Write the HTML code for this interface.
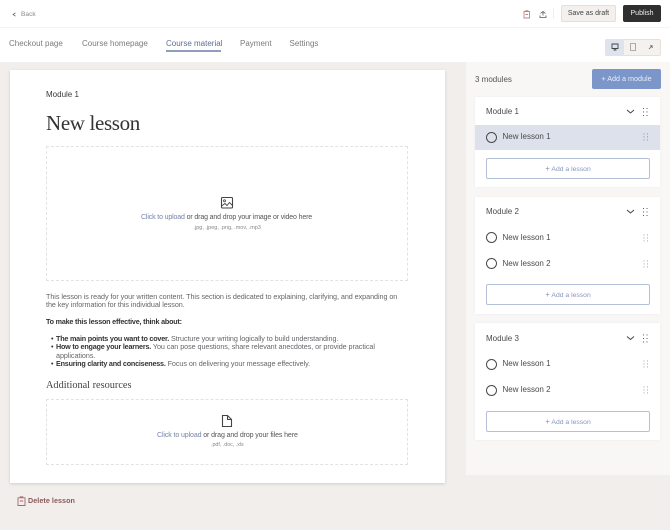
<!DOCTYPE html>
<html><head><meta charset="utf-8"><style>
html,body{margin:0;padding:0}
body{width:670px;height:530px;position:relative;overflow:hidden;background:#f2eeeb;font-family:"Liberation Sans",sans-serif;color:#3f3f3f}
.a{position:absolute;white-space:nowrap}
.b{position:absolute;box-sizing:border-box}
svg{position:absolute;overflow:visible;fill:none}
.t{font-size:8px;color:#7b7b7b;top:37.6px;line-height:12px}
.p{font-size:7.2px;line-height:8.4px;color:#66666a;letter-spacing:-.05px}
.p b{color:#333;letter-spacing:-.2px}
.card{background:#fff;left:475px;width:185px;box-shadow:0 0 2px rgba(0,0,0,.05)}
.mh{font-size:8px;color:#4a4a4a;line-height:12px}
.ln{font-size:8px;color:#4a4a4a;line-height:12px}
.c{width:11px;height:11px;border:1px solid #4a4a4a;border-radius:50%;left:486px}
.add{left:486px;width:164px;height:21px;background:#fff;border:1px solid #b4bfd8;border-radius:2px;text-align:center;font-size:6.8px;line-height:19px;color:#8596bd}
</style></head><body>

<div class="b" style="left:0;top:0;width:670px;height:62px;background:#fff"></div>
<div class="b" style="left:0;top:27px;width:670px;height:1px;background:#f6f4f2"></div>

<svg style="left:0;top:0" width="20" height="28"><path d="M15.5 12.8 L13 14.5 L15.5 16.2" stroke="#666" stroke-width=".8"/></svg>
<div class="a" style="left:21px;top:10px;font-size:6.6px;line-height:10px;color:#888">Back</div>

<div class="a t" style="left:9px">Checkout page</div>
<div class="a t" style="left:82px">Course homepage</div>
<div class="a t" style="left:166px;color:#5f6e94">Course material</div>
<div class="b" style="left:166px;top:50px;width:55px;height:1.5px;background:#8f9dbf"></div>
<div class="a t" style="left:240px">Payment</div>
<div class="a t" style="left:289.5px">Settings</div>

<svg style="left:520px;top:7px" width="30" height="16">
<path d="M4 4.5H9.5V11H4Z M5.6 4.5V3.7H7.9V4.5 M5.4 7.5H8.1" stroke="#bd8585" stroke-width=".9"/>
<path d="M20.5 6.5 23 4.5 25.5 6.5 M23 4.5V8.5 M20 8.5V10.5H26V8.5" stroke="#555" stroke-width=".8"/>
</svg>
<div class="b" style="left:553px;top:8px;width:1px;height:11px;background:#eee"></div>
<div class="b" style="left:561px;top:5px;width:55px;height:17px;background:#f3f0ed;border:1px solid #e3dfdb;border-radius:2px;text-align:center;font-size:7px;line-height:16px;color:#444">Save as draft</div>
<div class="b" style="left:623px;top:5px;width:38px;height:17px;background:#2f2f2f;border-radius:2px;text-align:center;font-size:7px;line-height:18px;color:#eee">Publish</div>

<div class="b" style="left:605px;top:38.5px;width:56px;height:17px;background:#f4f1ee;border:1px solid #e4e1dd;border-radius:2px"></div>
<div class="b" style="left:605px;top:38.5px;width:19px;height:17px;background:#dfe3ee;border-radius:2px 0 0 2px"></div>
<svg style="left:605px;top:38px" width="56" height="18">
<path d="M7 6H13V10.5H7Z M8.5 12H11.5 M10 10.5V12" stroke="#444" stroke-width=".9"/>
<path d="M25.5 5.5H30.5V12.5H25.5Z" stroke="#999" stroke-width=".8"/>
<path d="M44 11 47 8 M45 7.8H47.2V10" stroke="#666" stroke-width=".8"/>
</svg>

<div class="b" style="left:10px;top:70px;width:435px;height:413px;background:#fff;box-shadow:0 1px 3px rgba(0,0,0,.14)"></div>
<div class="a" style="left:46px;top:88.6px;font-size:8px;line-height:12px;color:#3a3a3a">Module 1</div>
<div class="a" style="left:46px;top:109px;font-family:'Liberation Serif',serif;font-size:21px;line-height:28px;color:#333;letter-spacing:-.35px">New lesson</div>

<div class="b" style="left:46px;top:146px;width:362px;height:135px;border:1px dashed #e2e2e2"></div>
<svg style="left:220px;top:196px" width="14" height="14">
<rect x="1.5" y="1.5" width="11" height="10.5" rx="1" stroke="#444" stroke-width="1.1"/>
<circle cx="4.5" cy="4.8" r="1" stroke="#444" stroke-width=".8"/>
<path d="M1.5 10 5 7.5 7 9.5 9.5 6.5 12.5 9.5" stroke="#444" stroke-width=".9"/>
</svg>
<div class="a" style="left:141px;top:212px;font-size:7px;line-height:11px;color:#555;letter-spacing:-.14px"><span style="color:#7484a8">Click to upload</span> or drag and drop your image or video here</div>
<div class="a" style="left:193.5px;top:223.5px;font-size:5.5px;line-height:8px;color:#888">.jpg, .jpeg, .png, .mov, .mp3</div>

<div class="a p" style="left:46px;top:292.5px">This lesson is ready for your written content. This section is dedicated to explaining, clarifying, and expanding on</div>
<div class="a p" style="left:46px;top:301px">the key information for this individual lesson.</div>
<div class="a p" style="left:46px;top:317.8px"><b>To make this lesson effective, think about:</b></div>
<div class="a p" style="left:51px;top:334.8px;color:#333">•</div>
<div class="a p" style="left:56px;top:334.8px"><b>The main points you want to cover.</b> Structure your writing logically to build understanding.</div>
<div class="a p" style="left:51px;top:343.2px;color:#333">•</div>
<div class="a p" style="left:56px;top:343.2px"><b>How to engage your learners.</b> You can pose questions, share relevant anecdotes, or provide practical</div>
<div class="a p" style="left:56px;top:351.6px">applications.</div>
<div class="a p" style="left:51px;top:360px;color:#333">•</div>
<div class="a p" style="left:56px;top:360px"><b>Ensuring clarity and conciseness.</b> Focus on delivering your message effectively.</div>

<div class="a" style="left:46px;top:379px;font-family:'Liberation Serif',serif;font-size:10.3px;line-height:14px;color:#444">Additional resources</div>

<div class="b" style="left:46px;top:399px;width:362px;height:65.5px;border:1px dashed #e2e2e2"></div>
<svg style="left:220px;top:414px" width="14" height="14">
<path d="M2.5 1.5H7.5L11.5 5.5V12.5H2.5Z M7.5 1.5V5.5H11.5" stroke="#444" stroke-width="1.1"/>
</svg>
<div class="a" style="left:157px;top:430px;font-size:7px;line-height:11px;color:#555;letter-spacing:-.1px"><span style="color:#7484a8">Click to upload</span> or drag and drop your files here</div>
<div class="a" style="left:211px;top:441px;font-size:5.3px;line-height:8px;color:#888">.pdf, .doc, .xls</div>

<svg style="left:16px;top:495px" width="12" height="12">
<path d="M2 2.8H9V10.5H2Z M4.2 2.8V1.8H6.8V2.8 M3.8 6H7.2" stroke="#a56a6a" stroke-width=".9"/>
</svg>
<div class="a" style="left:28px;top:495px;font-size:7.2px;line-height:11px;font-weight:bold;color:#8a5a5a;letter-spacing:.05px">Delete lesson</div>

<div class="b" style="left:466px;top:62px;width:204px;height:413px;background:#f9f7f5"></div>
<div class="a" style="left:475px;top:73.6px;font-size:8px;line-height:12px;color:#555">3 modules</div>
<div class="b" style="left:592px;top:69px;width:69px;height:20px;background:#7d96c9;border-radius:2px;text-align:center;font-size:7.2px;line-height:20px;color:#e8edf7">+ Add a module</div>

<div class="b card" style="top:97px;height:90px"></div>
<div class="a mh" style="left:486px;top:106px">Module 1</div>
<svg style="left:626px;top:105px" width="26" height="12"><path d="M1 5 4.5 8 8 5" stroke="#444" stroke-width="1"/><path d="M17.5 3v.9M17.5 6.5v.9M17.5 10v.9M21 3v.9M21 6.5v.9M21 10v.9" stroke="#444" stroke-width="1"/></svg>
<div class="b" style="left:475px;top:125px;width:185px;height:25px;background:#dde1eb"></div>
<div class="b c" style="top:131.5px"></div>
<div class="a ln" style="left:502.5px;top:131px">New lesson 1</div>
<svg style="left:640px;top:132px" width="10" height="12"><path d="M4 1.5v.9M4 4.5v.9M4 7.5v.9M7.5 1.5v.9M7.5 4.5v.9M7.5 7.5v.9" stroke="#888" stroke-width="1"/></svg>
<div class="b add" style="top:158px"><span style="font-size:8px">+</span> Add a lesson</div>

<div class="b card" style="top:197px;height:117px"></div>
<div class="a mh" style="left:486px;top:206px">Module 2</div>
<svg style="left:626px;top:206px" width="26" height="12"><path d="M1 4 4.5 7 8 4" stroke="#444" stroke-width="1"/><path d="M17.5 2v.9M17.5 5.5v.9M17.5 9v.9M21 2v.9M21 5.5v.9M21 9v.9" stroke="#444" stroke-width="1"/></svg>
<div class="b c" style="top:232px"></div>
<div class="a ln" style="left:502.5px;top:231.6px">New lesson 1</div>
<svg style="left:640px;top:233px" width="10" height="12"><path d="M4 1.5v.9M4 4.5v.9M4 7.5v.9M7.5 1.5v.9M7.5 4.5v.9M7.5 7.5v.9" stroke="#999" stroke-width="1"/></svg>
<div class="b c" style="top:258px"></div>
<div class="a ln" style="left:502.5px;top:257.6px">New lesson 2</div>
<svg style="left:640px;top:259px" width="10" height="12"><path d="M4 1.5v.9M4 4.5v.9M4 7.5v.9M7.5 1.5v.9M7.5 4.5v.9M7.5 7.5v.9" stroke="#999" stroke-width="1"/></svg>
<div class="b add" style="top:284px"><span style="font-size:8px">+</span> Add a lesson</div>

<div class="b card" style="top:323px;height:117px"></div>
<div class="a mh" style="left:486px;top:332.6px">Module 3</div>
<svg style="left:626px;top:332px" width="26" height="12"><path d="M1 4.5 4.5 7.5 8 4.5" stroke="#444" stroke-width="1"/><path d="M17.5 2.5v.9M17.5 6v.9M17.5 9.5v.9M21 2.5v.9M21 6v.9M21 9.5v.9" stroke="#444" stroke-width="1"/></svg>
<div class="b c" style="top:358.5px"></div>
<div class="a ln" style="left:502.5px;top:358px">New lesson 1</div>
<svg style="left:640px;top:359px" width="10" height="12"><path d="M4 1.5v.9M4 4.5v.9M4 7.5v.9M7.5 1.5v.9M7.5 4.5v.9M7.5 7.5v.9" stroke="#999" stroke-width="1"/></svg>
<div class="b c" style="top:384.5px"></div>
<div class="a ln" style="left:502.5px;top:384px">New lesson 2</div>
<svg style="left:640px;top:385px" width="10" height="12"><path d="M4 1.5v.9M4 4.5v.9M4 7.5v.9M7.5 1.5v.9M7.5 4.5v.9M7.5 7.5v.9" stroke="#999" stroke-width="1"/></svg>
<div class="b add" style="top:410.5px"><span style="font-size:8px">+</span> Add a lesson</div>

</body></html>
